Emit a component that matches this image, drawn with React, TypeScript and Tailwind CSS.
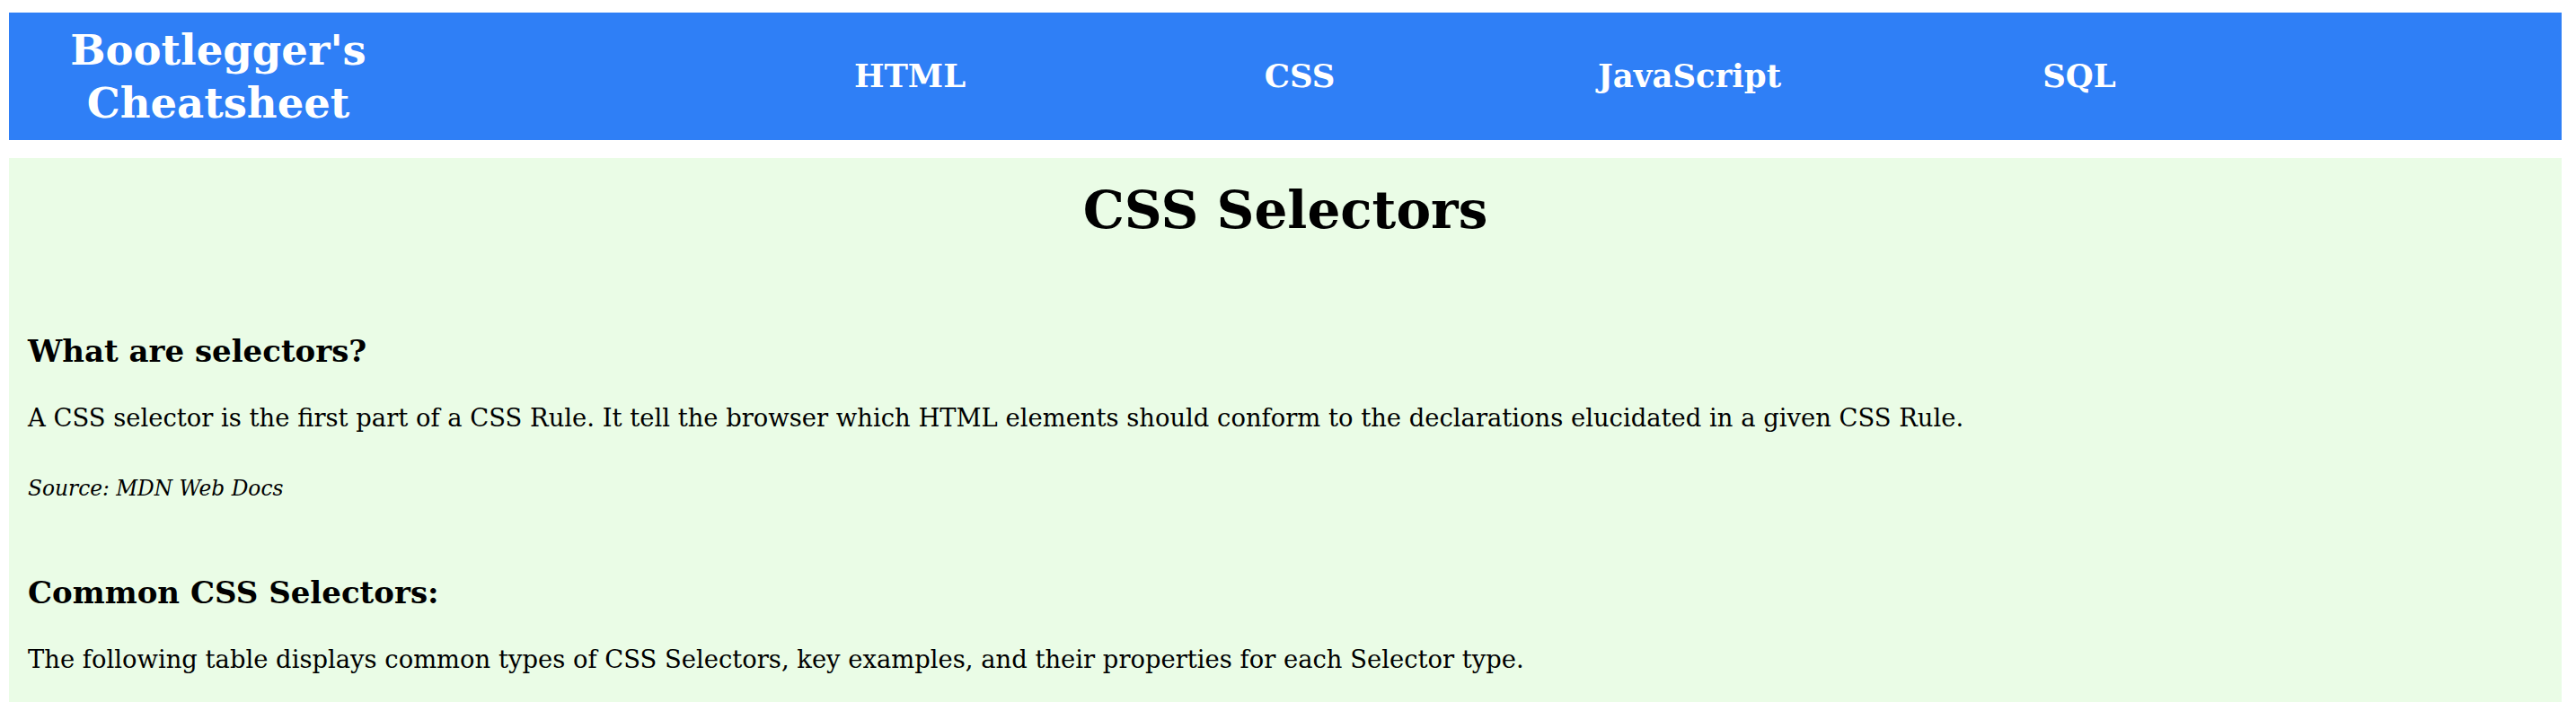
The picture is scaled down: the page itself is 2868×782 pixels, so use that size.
import React from 'react';

const navLinks = ['HTML', 'CSS', 'JavaScript', 'SQL'];

export default function App() {
  return (
    <div className="min-h-screen bg-white pt-[14px] pl-[10px] pr-[16px] font-['DejaVu_Serif',Georgia,serif] text-black">
      {/* Header */}
      <header className="h-[142px] bg-[#2f7ff6] text-white flex items-center">
        <div className="w-[466px] text-center text-[46.5px] leading-[59px] font-bold">
          Bootlegger's
          <br />
          Cheatsheet
        </div>
        <nav className="ml-[320px]">
          <ul className="flex">
            {navLinks.map((link) => (
              <li key={link} className="w-[434px] text-center text-[35.5px] font-bold">
                {link}
              </li>
            ))}
          </ul>
        </nav>
      </header>

      {/* Main Content */}
      <main className="mt-[20px] bg-[#eafce6] pt-[20px] pb-[40px] px-[21px]">
        <h1 className="text-center text-[58px] leading-[76px] font-bold">CSS Selectors</h1>

        <section className="mt-[97px]">
          <h3 className="text-[34px] leading-[44px] font-bold">What are selectors?</h3>
          <p className="mt-[33px] text-[27.4px] leading-[40px]">
            A CSS selector is the first part of a CSS Rule. It tell the browser which HTML elements should conform to the declarations elucidated in a given CSS Rule.
          </p>
          <p className="mt-[42px] text-[23.3px] leading-[32px] italic">Source: MDN Web Docs</p>
        </section>

        <section className="mt-[78px]">
          <h3 className="text-[34px] leading-[44px] font-bold">Common CSS Selectors:</h3>
          <p className="mt-[33px] text-[27.4px] leading-[40px]">
            The following table displays common types of CSS Selectors, key examples, and their properties for each Selector type.
          </p>
        </section>
      </main>
    </div>
  );
}
